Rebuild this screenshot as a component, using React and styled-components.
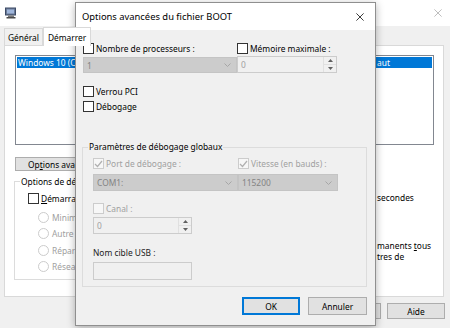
import styled, { createGlobalStyle } from "styled-components";

const GlobalStyle = createGlobalStyle`
  html, body { margin: 0; padding: 0; }
  body { font-family: "Noto Sans", "Open Sans", sans-serif; }
`;

const Desktop = styled.div`
  position: relative;
  width: 450px;
  height: 328px;
  overflow: hidden;
  background: #f0f0f0;
  font-family: "Noto Sans", "Open Sans", sans-serif;
  font-size: 8.4px;
  color: #000;
`;

/* ---------- background msconfig window ---------- */

const MainWindow = styled.div`
  display: flex;
  flex-direction: column;
  height: 100%;
`;

const MainTitleBar = styled.div`
  height: 26px;
  background: #ffffff;
  display: flex;
  align-items: center;
  justify-content: space-between;
  padding: 0 8px 0 5px;
  svg { display: block; }
`;

const TabStrip = styled.div`
  height: 19px;
  display: flex;
  align-items: flex-end;
  padding-left: 4px;
`;

const Tab = styled.div`
  height: ${p => (p.$active ? "18px" : "16px")};
  padding: 0 ${p => (p.$active ? "4px" : "3px")};
  display: flex;
  align-items: center;
  background: ${p => (p.$active ? "#ffffff" : "#f0f0f0")};
  border: 1px solid #d9d9d9;
  border-bottom: none;
  margin-bottom: ${p => (p.$active ? "-1px" : "0")};
  z-index: ${p => (p.$active ? 1 : 0)};
`;

const TabPanel = styled.div`
  height: 252px;
  margin: 0 6px 0 4px;
  background: #ffffff;
  border: 1px solid #d9d9d9;
  padding: 9px 9px 0 9px;
  box-sizing: border-box;
`;

const ListBox = styled.div`
  height: 90px;
  margin: 0 0 0 1px;
  border: 1px solid #828790;
  padding: 1px;
  box-sizing: border-box;
`;

const ListRow = styled.div`
  height: 11px;
  line-height: 11px;
  display: flex;
  justify-content: space-between;
  padding: 0 0 0 1px;
  background: ${p => (p.$selected ? "#0078d7" : "transparent")};
  color: ${p => (p.$selected ? "#ffffff" : "#000")};
`;

const Clip = styled.span`
  width: ${p => p.$w}px;
  overflow: hidden;
  white-space: nowrap;
  flex: none;
`;

const RowTail = styled.span`
  margin-right: 42px;
  white-space: nowrap;
`;

const WinButton = styled.div`
  height: ${p => p.$h || 16}px;
  width: ${p => p.$w}px;
  box-sizing: border-box;
  display: flex;
  align-items: center;
  justify-content: ${p => (p.$left ? "flex-start" : "center")};
  padding-left: ${p => (p.$left ? "12px" : "0")};
  overflow: hidden;
  white-space: nowrap;
  background: #e1e1e1;
  border: 1px solid ${p => (p.$default ? "#0078d7" : "#adadad")};
  box-shadow: ${p => (p.$default ? "inset 0 0 0 1px #0078d7" : "none")};
  color: #000;
`;

const AdvancedButton = styled(WinButton)`
  margin: 12px 0 0 1px;
`;

const LowerRow = styled.div`
  display: flex;
  margin-top: 5px;
`;

const OldGroup = styled.fieldset`
  margin: 0;
  width: 66px;
  min-width: 0;
  height: 104px;
  flex: none;
  box-sizing: border-box;
  border: 1px solid #dcdcdc;
  border-right: none;
  padding: 0 0 0 13px;
  overflow: hidden;
  white-space: nowrap;
  legend {
    margin-left: -8px;
    padding: 0 1px;
    line-height: 11px;
  }
`;

const Spacer = styled.div`
  width: 297px;
  flex: none;
`;

const Notes = styled.div`
  display: flex;
  flex-direction: column;
  line-height: 11px;
`;

const NoteLine = styled.div`
  margin-top: ${p => p.$mt || 0}px;
  white-space: nowrap;
`;

const Acc = styled.span`
  text-decoration: underline;
`;

const RadioRow = styled.div`
  display: flex;
  align-items: center;
  gap: 3px;
  height: 12px;
  margin: ${p => p.$mt}px 0 0 10px;
  color: #a0a0a0;
  white-space: nowrap;
`;

const RadioDot = styled.span`
  width: 9px;
  height: 9px;
  border-radius: 50%;
  border: 1px solid #cccccc;
  background: #ffffff;
  flex: none;
`;

const MainFooter = styled.div`
  display: flex;
  justify-content: flex-end;
  gap: 6px;
  padding: 6px 5px 0 0;
`;

/* ---------- dialog ---------- */

const Dialog = styled.div`
  position: absolute;
  left: 75px;
  top: 2px;
  width: 301px;
  height: 324px;
  box-sizing: border-box;
  border: 1px solid #8f8f8f;
  background: #f0f0f0;
  box-shadow: 0 2px 8px rgba(0, 0, 0, 0.3);
  display: flex;
  flex-direction: column;
`;

const DialogTitle = styled.div`
  height: 27px;
  flex: none;
  background: #ffffff;
  display: flex;
  align-items: center;
  justify-content: space-between;
  padding: 0 11px 0 6px;
  font-size: 9.4px;
  color: #000;
  svg { display: block; }
`;

const DialogBody = styled.div`
  padding: 0 8px 0 6px;
  display: flex;
  flex-direction: column;
`;

const TwoCols = styled.div`
  display: grid;
  grid-template-columns: ${p => p.$first}px 100px;
  margin-top: ${p => p.$mt || 0}px;
  margin-left: ${p => p.$ml || 0}px;
`;

const Col = styled.div`
  display: flex;
  flex-direction: column;
  width: ${p => (p.$w ? `${p.$w}px` : "auto")};
`;

const CheckRow = styled.label`
  display: flex;
  align-items: center;
  gap: 2px;
  height: 13px;
  margin-top: ${p => p.$mt || 0}px;
  margin-left: ${p => p.$ml || 0}px;
  color: ${p => (p.$disabled ? "#a0a0a0" : "#000")};
  white-space: nowrap;
`;

const Box = styled.span`
  width: 11px;
  height: 11px;
  box-sizing: border-box;
  flex: none;
  border: 1px solid ${p => (p.$disabled ? "#cccccc" : "#333333")};
  background: ${p => (p.$disabled ? "#f7f7f7" : "#ffffff")};
  display: flex;
  align-items: center;
  justify-content: center;
  svg { display: block; }
`;

const Combo = styled.div`
  height: ${p => p.$h || 16}px;
  margin-top: ${p => p.$mt || 0}px;
  box-sizing: border-box;
  background: #cccccc;
  border: 1px solid #c4c4c4;
  color: #838383;
  display: flex;
  align-items: center;
  justify-content: space-between;
  padding: 0 5px 0 3px;
  svg { display: block; }
`;

const Spinner = styled.div`
  height: 17px;
  margin-top: ${p => p.$mt || 0}px;
  box-sizing: border-box;
  background: #f0f0f0;
  border: 1px solid #cccccc;
  color: #a0a0a0;
  display: flex;
  align-items: stretch;
`;

const SpinValue = styled.div`
  flex: 1;
  display: flex;
  align-items: center;
  padding-left: 3px;
`;

const SpinArrows = styled.div`
  width: 12px;
  display: flex;
  flex-direction: column;
  border-left: 1px solid #e0e0e0;
  span {
    flex: 1;
    display: flex;
    align-items: center;
    justify-content: center;
  }
  span + span { border-top: 1px solid #e0e0e0; }
  svg { display: block; }
`;

const Group = styled.fieldset`
  margin: 28px 0 0 0;
  padding: 0 0 6px 10px;
  border: 1px solid #dcdcdc;
  legend {
    margin-left: -5px;
    padding: 0 1px;
    line-height: 12px;
    color: #000;
  }
`;

const FieldLabel = styled.div`
  height: 12px;
  line-height: 12px;
  margin-top: 13px;
  color: #222;
`;

const TextInput = styled.div`
  width: 99px;
  height: 18px;
  margin-top: 3px;
  box-sizing: border-box;
  background: #f0f0f0;
  border: 1px solid #cccccc;
`;

const ButtonRow = styled.div`
  display: flex;
  justify-content: flex-end;
  gap: 8px;
  margin-top: 10px;
`;

/* ---------- small drawings ---------- */

const Chevron = () => (
  <svg width="7" height="4" viewBox="0 0 7 4">
    <path d="M0.5 0.5 L3.5 3.5 L6.5 0.5" fill="none" stroke="#a6a6a6" strokeWidth="1" />
  </svg>
);

const Tri = ({ up }) => (
  <svg width="5" height="3" viewBox="0 0 5 3">
    <path d={up ? "M0 3 L2.5 0 L5 3 Z" : "M0 0 L2.5 3 L5 0 Z"} fill="#606060" />
  </svg>
);

const Tick = () => (
  <svg width="9" height="8" viewBox="0 0 9 8">
    <path d="M1 4 L3.5 6.5 L8 1" fill="none" stroke="#b0b0b0" strokeWidth="1.2" />
  </svg>
);

const CloseX = ({ color, size }) => (
  <svg width={size} height={size} viewBox="0 0 10 10">
    <path d="M0.5 0.5 L9.5 9.5 M9.5 0.5 L0.5 9.5" stroke={color} strokeWidth="1.1" />
  </svg>
);

const MsconfigIcon = () => (
  <svg width="12" height="12" viewBox="0 0 12 12">
    <rect x="0.5" y="1" width="10" height="7" fill="#6a7a96" stroke="#3c4a66" />
    <rect x="2" y="2.5" width="7" height="4" fill="#9fb6dc" />
    <rect x="3" y="8.5" width="6" height="1.5" fill="#7a7a7a" />
    <rect x="1.5" y="10" width="9" height="1.5" fill="#4a4a4a" />
  </svg>
);

const Check = ({ label, checked, disabled, mt, ml }) => (
  <CheckRow $disabled={disabled} $mt={mt} $ml={ml}>
    <Box $disabled={disabled}>{checked && <Tick />}</Box>
    <span>{label}</span>
  </CheckRow>
);

const SpinBox = ({ value, mt }) => (
  <Spinner $mt={mt}>
    <SpinValue>{value}</SpinValue>
    <SpinArrows>
      <span><Tri up /></span>
      <span><Tri /></span>
    </SpinArrows>
  </Spinner>
);

const ComboBox = ({ value, mt, h }) => (
  <Combo $mt={mt} $h={h}>
    <span>{value}</span>
    <Chevron />
  </Combo>
);

const radios = ["Minimal", "Autre", "Réparation", "Réseau"];

export default function App() {
  return (
    <Desktop>
      <GlobalStyle />
      <MainWindow>
        <MainTitleBar>
          <MsconfigIcon />
          <CloseX color="#b5b5b5" size={8} />
        </MainTitleBar>
        <TabStrip>
          <Tab>Général</Tab>
          <Tab $active>Démarrer</Tab>
        </TabStrip>
        <TabPanel>
          <ListBox>
            <ListRow $selected>
              <Clip $w={62}>Windows 10 (C:</Clip>
              <RowTail>aut</RowTail>
            </ListRow>
          </ListBox>
          <AdvancedButton $w={64} $h={14} $left>
            <span>Op<Acc>t</Acc>ions avan</span>
          </AdvancedButton>
          <LowerRow>
            <OldGroup>
              <legend>Options de dé</legend>
              <CheckRow $mt={5}>
                <Box />
                <span><Acc>D</Acc>émarrage</span>
              </CheckRow>
              {radios.map((r, i) => (
                <RadioRow key={r} $mt={i === 0 ? 6 : 4.5}>
                  <RadioDot />
                  <span>{r}</span>
                </RadioRow>
              ))}
            </OldGroup>
            <Spacer />
            <Notes>
              <NoteLine $mt={16}>secondes</NoteLine>
              <NoteLine $mt={37}>manents <Acc>t</Acc>ous</NoteLine>
              <NoteLine>tres de</NoteLine>
            </Notes>
          </LowerRow>
        </TabPanel>
        <MainFooter>
          <WinButton $w={10} />
          <WinButton $w={58}>Aide</WinButton>
        </MainFooter>
      </MainWindow>

      <Dialog>
        <DialogTitle>
          <span>Options avancées du fichier BOOT</span>
          <CloseX color="#222" size={8} />
        </DialogTitle>
        <DialogBody>
          <TwoCols $first={154} $mt={12} $ml={1}>
            <Col>
              <Check label="Nombre de processeurs :" />
              <ComboBox value="1" mt={2} />
            </Col>
            <Col>
              <Check label="Mémoire maximale :" />
              <SpinBox value="0" mt={1} />
            </Col>
          </TwoCols>
          <Check label="Verrou PCI" mt={12} ml={1} />
          <Check label="Débogage" mt={2} ml={1} />
          <Group>
            <legend>Paramètres de débogage globaux</legend>
            <TwoCols $first={145} $mt={4}>
              <Col>
                <Check label="Port de débogage :" checked disabled />
                <ComboBox value="COM1:" mt={4} h={17} />
              </Col>
              <Col>
                <Check label="Vitesse (en bauds) :" checked disabled />
                <ComboBox value="115200" mt={4} h={17} />
              </Col>
            </TwoCols>
            <Col $w={99}>
              <Check label="Canal :" disabled mt={11} />
              <SpinBox value="0" mt={2} />
            </Col>
            <FieldLabel>Nom cible USB :</FieldLabel>
            <TextInput />
          </Group>
          <ButtonRow>
            <WinButton $w={58} $h={18} $default>OK</WinButton>
            <WinButton $w={59} $h={18}>Annuler</WinButton>
          </ButtonRow>
        </DialogBody>
      </Dialog>
    </Desktop>
  );
}
